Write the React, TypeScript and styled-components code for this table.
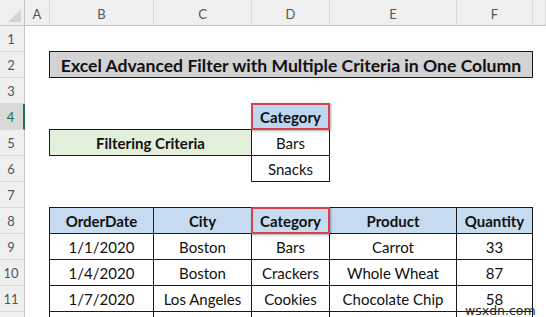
import styled, { createGlobalStyle } from "styled-components";

const GlobalStyle = createGlobalStyle`
  html, body {
    margin: 0;
    padding: 0;
    background: #ffffff;
    overflow: hidden;
  }
`;

const Sheet = styled.div`
  position: relative;
  width: 546px;
  height: 317px;
  overflow: hidden;
  display: grid;
  grid-template-columns: 25px 25px 104px 98px 78px 127px 76px 1fr;
  grid-template-rows: repeat(13, 26px);
  font-family: Lato, "Open Sans", sans-serif;
  background: #ffffff;
`;

const Corner = styled.div`
  grid-column: 1;
  grid-row: 1;
  position: relative;
  background: #efefef;
  border-right: 1px solid #c4c4c4;
  border-bottom: 1px solid #c4c4c4;

  &::after {
    content: "";
    position: absolute;
    right: 3px;
    bottom: 3px;
    border-left: 13px solid transparent;
    border-bottom: 13px solid #d4d4d4;
  }
`;

const ColHead = styled.div<{ $col: number }>`
  grid-column: ${(p) => p.$col};
  grid-row: 1;
  display: flex;
  align-items: center;
  justify-content: center;
  padding-top: 2px;
  background: #efefef;
  border-right: 1px solid #dadada;
  border-bottom: 1px solid #c4c4c4;
  font-size: 13px;
  color: #555555;
`;

const RowHead = styled.div<{ $row: number; $active?: boolean }>`
  grid-column: 1;
  grid-row: ${(p) => p.$row};
  display: flex;
  align-items: center;
  justify-content: center;
  padding-right: 2px;
  background: ${(p) => (p.$active ? "#d9d9d9" : "#efefef")};
  border-bottom: 1px solid #dadada;
  border-right: ${(p) => (p.$active ? "2px solid #217346" : "1px solid #c4c4c4")};
  font-size: 13px;
  color: ${(p) => (p.$active ? "#217346" : "#555555")};
`;

const Cell = styled.div<{
  $col: number;
  $row: number;
  $span?: number;
  $fill?: string;
  $bold?: boolean;
  $mark?: boolean;
  $size?: number;
}>`
  grid-column: ${(p) => p.$col} / span ${(p) => p.$span ?? 1};
  grid-row: ${(p) => p.$row};
  margin: -1px 0 0 -1px;
  display: flex;
  align-items: center;
  justify-content: center;
  padding-top: 1px;
  background: ${(p) => p.$fill ?? "#ffffff"};
  border: ${(p) => (p.$mark ? "2px solid #d7414b" : "1px solid #1a1a1a")};
  box-shadow: ${(p) => (p.$mark ? "1px 1px 2px rgba(0, 0, 0, 0.35)" : "none")};
  font-size: ${(p) => p.$size ?? 15}px;
  font-weight: ${(p) => (p.$bold ? 700 : 400)};
  color: #111111;
  white-space: nowrap;
  z-index: ${(p) => (p.$mark ? 2 : 1)};
`;

const Watermark = styled.span`
  position: absolute;
  left: 465px;
  top: 304px;
  font-family: "DejaVu Sans", sans-serif;
  font-size: 12.5px;
  line-height: 13px;
  color: #2a2a2a;
  z-index: 5;
`;

const letters = ["A", "B", "C", "D", "E", "F"];

const rows = [
  ["1/1/2020", "Boston", "Bars", "Carrot", "33"],
  ["1/4/2020", "Boston", "Crackers", "Whole Wheat", "87"],
  ["1/7/2020", "Los Angeles", "Cookies", "Chocolate Chip", "58"],
  ["", "", "", "", ""],
];

const headers = ["OrderDate", "City", "Category", "Product", "Quantity"];

export default function App() {
  return (
    <>
      <GlobalStyle />
      <Sheet>
        <Corner />
        {letters.map((l, i) => (
          <ColHead key={l} $col={i + 2}>
            {l}
          </ColHead>
        ))}
        <ColHead $col={8} />
        {Array.from({ length: 12 }, (_, i) => (
          <RowHead key={i} $row={i + 2} $active={i + 1 === 4}>
            {i + 1}
          </RowHead>
        ))}

        <Cell $col={3} $row={3} $span={5} $fill="#d3d3d3" $bold $size={17.6}>
          Excel Advanced Filter with Multiple Criteria in One Column
        </Cell>

        <Cell $col={5} $row={5} $fill="#bdd7ee" $bold $mark>
          Category
        </Cell>
        <Cell $col={3} $row={6} $span={2} $fill="#e2efda" $bold>
          Filtering Criteria
        </Cell>
        <Cell $col={5} $row={6}>Bars</Cell>
        <Cell $col={5} $row={7}>Snacks</Cell>

        {headers.map((h, i) => (
          <Cell
            key={h}
            $col={i + 3}
            $row={9}
            $fill="#c6dbef"
            $bold
            $mark={h === "Category"}
          >
            {h}
          </Cell>
        ))}
        {rows.map((r, ri) =>
          r.map((v, ci) => (
            <Cell key={`${ri}-${ci}`} $col={ci + 3} $row={ri + 10}>
              {v}
            </Cell>
          ))
        )}
        <Watermark>wsxdn.com</Watermark>
      </Sheet>
    </>
  );
}
